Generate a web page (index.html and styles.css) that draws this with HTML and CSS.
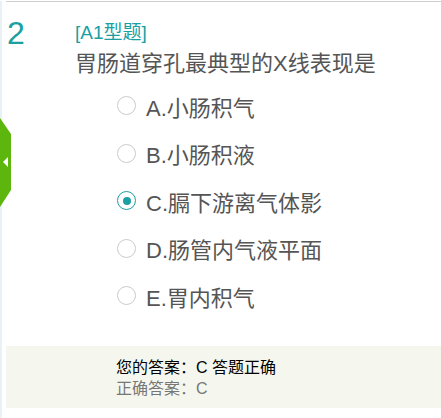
FILE: index.html
```html
<!DOCTYPE html>
<html lang="zh-CN">
<head>
    <meta charset="UTF-8">
    <meta name="viewport" content="width=device-width, initial-scale=1.0">
    <title>试题</title>
    <link rel="stylesheet" href="styles.css">
</head>
<body>
    <div class="page">
        <div class="side-tab"><span class="side-arrow"></span></div>
        <div class="sheet">
            <div class="question">
                <div class="q-num">2</div>
                <div class="q-body">
                    <div class="q-type">[A1型题]</div>
                    <div class="q-title">胃肠道穿孔最典型的X线表现是</div>
                    <ul class="options">
                        <li><span class="radio"></span>A.小肠积气</li>
                        <li><span class="radio"></span>B.小肠积液</li>
                        <li><span class="radio checked"></span>C.膈下游离气体影</li>
                        <li><span class="radio"></span>D.肠管内气液平面</li>
                        <li><span class="radio"></span>E.胃内积气</li>
                    </ul>
                </div>
            </div>
            <div class="answer">
                <div class="my-answer">您的答案：C 答题正确</div>
                <div class="right-answer">正确答案：C</div>
            </div>
        </div>
    </div>
</body>
</html>
```

FILE: styles.css
```css
body {
    margin: 0;
    font-family: "Liberation Sans", "Noto Sans CJK SC", sans-serif;
    background-color: #fff;
}
.page {
    position: relative;
    min-height: 418px;
    border-left: 2px solid #e8f2f5;
}
.side-tab {
    position: absolute;
    left: -2px;
    top: 117px;
    width: 11px;
    height: 89px;
    background-color: #5cb60e;
    clip-path: polygon(0 0, 100% 18%, 100% 81%, 0 100%);
}
.side-arrow {
    position: absolute;
    left: 3px;
    top: 39px;
    width: 0;
    height: 0;
    border-top: 5px solid transparent;
    border-bottom: 5px solid transparent;
    border-right: 5px solid #fff;
}
.sheet {
    margin-left: 4px;
    margin-top: 1px;
    border-top: 1px solid #cfcfcf;
}
.question {
    display: flex;
}
.q-num {
    width: 69px;
    padding-left: 1px;
    padding-top: 14px;
    box-sizing: border-box;
    font-size: 32px;
    line-height: 34px;
    color: #1a9fa2;
}
.q-body {
    flex: 1;
}
.q-type {
    margin-top: 20px;
    font-size: 19px;
    line-height: 22px;
    color: #1a9fa2;
}
.q-title {
    margin-top: 5px;
    font-size: 22px;
    line-height: 30px;
    color: #555;
}
.options {
    list-style: none;
    margin: 3px 0 0;
    padding: 0 0 0 42px;
}
.options li {
    display: flex;
    align-items: center;
    height: 47.5px;
    font-size: 22px;
    color: #555;
}
.radio {
    width: 19px;
    height: 19px;
    margin-right: 10px;
    border: 1.5px solid #cbcbcb;
    border-radius: 50%;
    box-sizing: border-box;
    display: flex;
    align-items: center;
    justify-content: center;
}
.radio.checked {
    border-color: #1a9fa2;
}
.radio.checked::after {
    content: "";
    width: 8px;
    height: 8px;
    border-radius: 50%;
    background-color: #1a9fa2;
}
.answer {
    margin-top: 26px;
    padding: 11px 0 9px 110px;
    background-color: #f5f7ef;
    font-size: 16px;
    line-height: 21px;
}
.my-answer {
    color: #000;
}
.right-answer {
    color: #777;
}
```
